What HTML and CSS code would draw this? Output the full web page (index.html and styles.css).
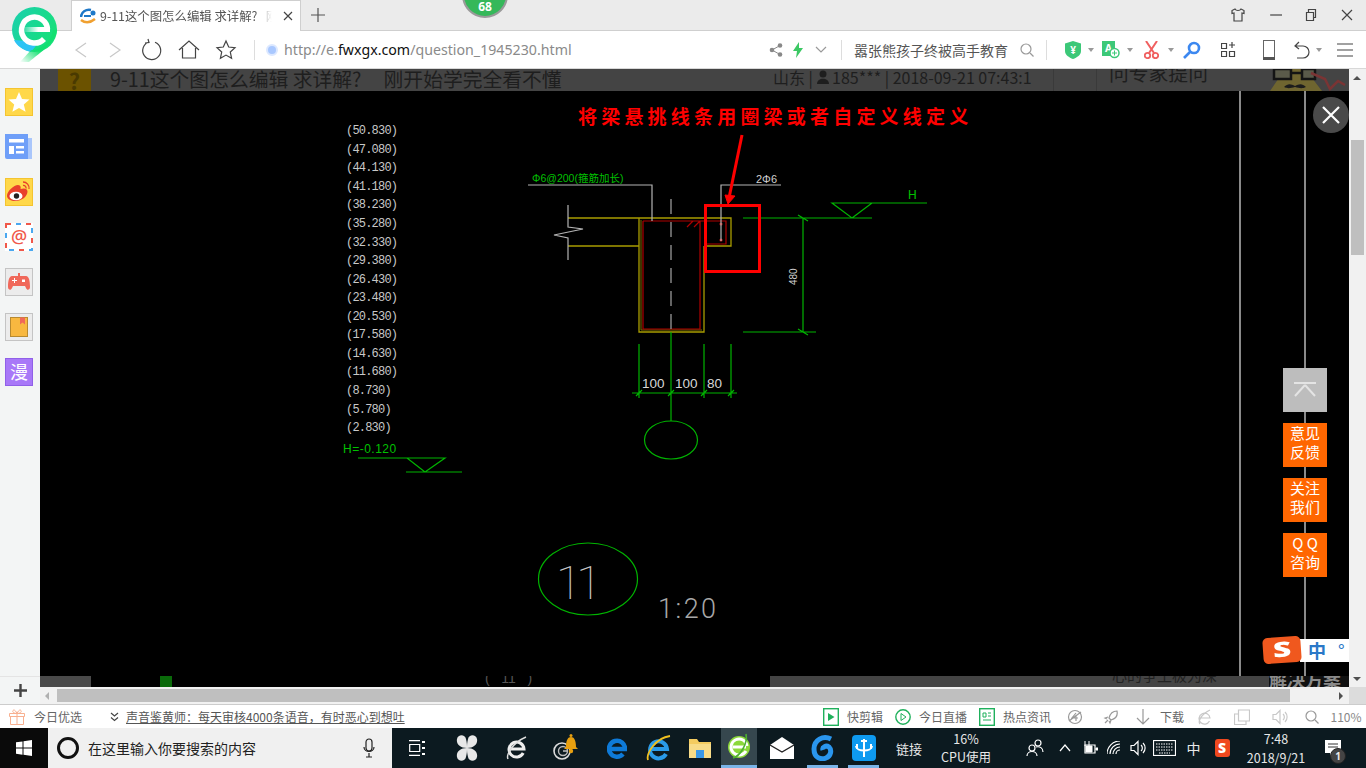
FILE: index.html
```html
<!DOCTYPE html>
<html lang="zh-CN">
<head>
    <meta charset="UTF-8">
    <title>9-11这个图怎么编辑 求详解？</title>
    <link rel="stylesheet" href="styles.css">
</head>
<body>
<div class="window">

    <!-- tab strip -->
    <div class="tabbar">
        <div class="tab">
            <svg class="tab-icon" width="16" height="16" viewBox="0 0 16 16"><path d="M1 9C1 4 6 1 11 2" fill="none" stroke="#1e78c8" stroke-width="2.4"/><path d="M4 8h7" stroke="#1e78c8" stroke-width="2"/><path d="M1 12c4 3 9 3 14-1" fill="none" stroke="#f0a030" stroke-width="2.6"/><circle cx="13" cy="5" r="2.5" fill="#1e78c8"/></svg>
            <span class="tab-title">9-11这个图怎么编辑 求详解? &nbsp;&nbsp;刚开始学完全看不懂</span>
            <svg class="tab-close" width="10" height="10" viewBox="0 0 10 10"><path d="M1 1l8 8M9 1l-8 8" stroke="#444" stroke-width="1.2"/></svg>
        </div>
        <svg class="tab-new" width="14" height="14" viewBox="0 0 14 14"><path d="M7 0v14M0 7h14" stroke="#555" stroke-width="1.2"/></svg>
        <div class="win-controls">
            <svg width="14" height="14" viewBox="0 0 14 14"><path d="M4 1L1 2.500v3l2-.5V13h8V5l2 .5v-3L10 1C9 3 5 3 4 1z" class="ln"/></svg>
            <svg width="12" height="12" viewBox="0 0 12 12"><path d="M0 6h12" class="ln"/></svg>
            <svg width="12" height="12" viewBox="0 0 12 12"><path d="M1.500 3.500h7v8h-7zM3.500 3.500v-3h7v8h-2" class="ln"/></svg>
            <svg width="12" height="12" viewBox="0 0 12 12"><path d="M1 1l10 10M11 1L1 11" class="ln"/></svg>
        </div>
    </div>

    <!-- logo and badge lie over the tab strip -->
    <svg class="logo" width="48" height="58" viewBox="0 0 48 58">
        <defs>
            <linearGradient id="lg1" x1="0" y1="0" x2="1" y2=".6"><stop offset="0" stop-color="#1ccfb0"/><stop offset="1" stop-color="#16e078"/></linearGradient>
            <linearGradient id="lg2" x1="1" y1="0" x2="0" y2="1"><stop offset="0" stop-color="#12e070"/><stop offset=".55" stop-color="#12e070"/><stop offset="1" stop-color="#12e070" stop-opacity="0"/></linearGradient>
            <linearGradient id="lg3" x1="0" y1="0" x2="1" y2="0"><stop offset="0" stop-color="#fff" stop-opacity=".1"/><stop offset=".55" stop-color="#fff"/></linearGradient>
        </defs>
        <circle cx="23.500" cy="23.500" r="22.500" fill="url(#lg1)"/>
        <path d="M3 34C6 40 12 44 20 46L28 36z" fill="#2ec4f4"/>
        <path d="M46 24C45 36 30 46 18 56H9L20 44C30 44 40 36 42 24z" fill="url(#lg2)"/>
        <rect x="13" y="21" width="26" height="5" fill="url(#lg3)"/>
        <path d="M36.500 23.500A13 13 0 1 0 33 33" fill="none" stroke="#fff" stroke-width="5.500"/>
    </svg>
    <div class="badge">68</div>

    <!-- address bar -->
    <div class="toolbar">
        <div class="nav-tools">
            <svg width="24" height="24" viewBox="0 0 24 24"><path d="M17 5L7 12l10 7" class="ln ln-pale"/></svg>
            <svg class="nav-fwd" width="24" height="24" viewBox="0 0 24 24"><path d="M7 5l10 7-10 7" class="ln ln-pale"/></svg>
            <svg width="24" height="24" viewBox="0 0 24 24"><path d="M9 4a9 9 0 1 0 6 .2M8 1l1 3.500L5 5" class="ln"/></svg>
            <svg width="24" height="24" viewBox="0 0 24 24"><path d="M2 12L12 3l10 9M5.500 10v10h13V10" class="ln"/></svg>
            <svg width="24" height="24" viewBox="0 0 24 24"><path d="M12 3l2.700 6 6.300.7-4.700 4.300 1.300 6.300-5.600-3.200-5.600 3.200 1.300-6.300L3 9.700 9.300 9z" class="ln"/></svg>
        </div>
        <i class="divider divider-nav"></i>
        <div class="address">
            <i class="addr-dot"></i>
            <span class="url">http://e.<b>fwxgx.com</b>/question_1945230.html</span>
        </div>
        <div class="tools">
            <svg width="14" height="14" viewBox="0 0 14 14"><circle cx="3" cy="7" r="2.300" fill="#888"/><circle cx="11" cy="2.500" r="2.300" fill="#888"/><circle cx="11" cy="11.500" r="2.300" fill="#888"/><path d="M3 7l8-4.500M3 7l8 4.500" stroke="#888"/></svg>
            <svg width="12" height="16" viewBox="0 0 12 16"><path d="M7 0L1 9h4l-1 7 7-10H7z" fill="#3cc864"/></svg>
            <svg width="12" height="8" viewBox="0 0 12 8"><path d="M1 1l5 5 5-5" class="ln ln-grey"/></svg>
            <i class="divider"></i>
            <span class="hot-search">嚣张熊孩子终被高手教育</span>
            <svg width="14" height="14" viewBox="0 0 14 14"><circle cx="6" cy="6" r="5" class="ln ln-grey"/><path d="M10 10l3.500 3.500" class="ln ln-grey"/></svg>
            <i class="divider divider-2"></i>
            <svg width="16" height="18" viewBox="0 0 16 18"><path d="M8 0l8 2.500V10c0 4-4 6.500-8 8-4-1.500-8-4-8-8V2.500z" fill="#3cc878"/><text x="8" y="13" class="shield-text">¥</text></svg>
            <i class="caret"></i>
            <svg width="18" height="19" viewBox="0 0 18 19"><path d="M0 1h13v15H0z" fill="#3cc878"/><text x="6.500" y="12" class="shield-text">A</text><circle cx="12.500" cy="13" r="4.500" fill="#fff" stroke="#3cc878" stroke-width="1.500"/><path d="M10 13h5M12.500 10.500v5" stroke="#3cc878"/></svg>
            <i class="caret"></i>
            <svg width="15" height="18" viewBox="0 0 15 18"><path d="M2 0l8 12M13 0L5 12" stroke="#f06060" stroke-width="2"/><circle cx="3.500" cy="14.500" r="2.700" fill="none" stroke="#f06060" stroke-width="1.800"/><circle cx="11.500" cy="14.500" r="2.700" fill="none" stroke="#f06060" stroke-width="1.800"/></svg>
            <i class="caret"></i>
            <svg width="18" height="18" viewBox="0 0 18 18"><circle cx="11" cy="7" r="5" fill="none" stroke="#3c88f0" stroke-width="2.600"/><path d="M7 11l-6 6" stroke="#3c88f0" stroke-width="2.600"/></svg>
            <svg width="15" height="17" viewBox="0 0 15 17"><path d="M.5 2.500h5v5h-5zM.5 10.500h5v5h-5zM8.500 10.500h5v5h-5z" class="ln"/><path d="M11 1v6M8 4h6" class="ln"/></svg>
            <svg width="12" height="20" viewBox="0 0 12 20"><rect x=".5" y=".5" width="11" height="19" class="ln ln-thin"/><path d="M0 17h12v3H0z" fill="#555"/></svg>
            <svg width="16" height="18" viewBox="0 0 16 18"><path d="M5 1L1 5l4 3M1 5h8a6 6 0 0 1 0 12H3" class="ln"/></svg>
            <i class="caret"></i>
            <svg width="16" height="14" viewBox="0 0 16 14"><path d="M0 1h16M0 7h16M0 13h16" class="ln"/></svg>
        </div>
    </div>

    <div class="content">
        <aside class="sidebar">
            <div class="side-icons">
                <svg width="28" height="28" viewBox="0 0 28 28"><rect x=".5" y=".5" width="27" height="27" fill="#ffd84a" stroke="#f4c430"/><path d="M14 4l3 7 7.500.6-5.700 4.800 1.800 7.300L14 20l-6.600 3.700 1.800-7.300-5.700-4.800L11 11z" fill="#fff"/></svg>
                <svg width="28" height="28" viewBox="0 0 28 28"><path d="M22 5h5v21h-5z" fill="#a9c6fb"/><path d="M0 1h23v25H2a2 2 0 0 1-2-2z" fill="#6f9ff8"/><path d="M4 6h15v3.500H4zM4 13h5v8H4zM11 13h8v2.500h-8zM11 18h8v2.500h-8z" fill="#fff"/></svg>
                <svg width="28" height="28" viewBox="0 0 28 28"><rect x=".5" y=".5" width="27" height="27" fill="#ffd84a" stroke="#f4c430"/><path d="M2 18c0-5 7-11 11-11 3 0 3 3 2.500 4 3-1 7-1 7 2.500 0 5-6 9.500-12 9.500-4.500 0-8.500-2-8.500-5z" fill="#e8412c"/><ellipse cx="11" cy="18" rx="6.500" ry="4.300" fill="#fff"/><circle cx="11.500" cy="18" r="2.700" fill="#222"/><path d="M18 4a6 6 0 0 1 6 7M18 7.500a2.500 2.500 0 0 1 3 3" fill="none" stroke="#e8412c" stroke-width="1.300"/></svg>
                <svg width="28" height="28" viewBox="0 0 28 28"><rect width="28" height="28" fill="#fff"/><rect x="1" y="1" width="26" height="26" fill="none" stroke="#4aa8f0" stroke-width="2" stroke-dasharray="5 15" stroke-dashoffset="-10"/><rect x="1" y="1" width="26" height="26" fill="none" stroke="#f0584a" stroke-width="2" stroke-dasharray="5 15"/><text x="14" y="20" class="mail-at">@</text></svg>
                <svg width="28" height="28" viewBox="0 0 28 28"><rect x=".5" y=".5" width="27" height="27" fill="#ececec" stroke="#c4c4c4"/><path d="M7 8h14c3 0 4 5 4 11 0 3-3 4-4 1l-1-2H8l-1 2c-1 3-4 2-4-1 0-6 1-11 4-11z" fill="#f0685a"/><path d="M13 5h2v3h-2z" fill="#f0685a"/><path d="M7 12.500h5M9.500 10v5" stroke="#fff"/><rect x="17" y="11.500" width="3" height="2.500" fill="#fff"/></svg>
                <svg width="28" height="28" viewBox="0 0 28 28"><rect x=".5" y=".5" width="27" height="27" fill="#ececec" stroke="#c4c4c4"/><rect x="5.500" y="4.500" width="17" height="19" fill="#f8b840" stroke="#b88a30"/><path d="M15 4.500h5v7l-2.500-2-2.500 2z" fill="#f0685a"/></svg>
                <div class="side-man">漫</div>
            </div>
            <div class="side-add">
                <svg width="13" height="13" viewBox="0 0 13 13"><path d="M6.500 0v13M0 6.500h13" stroke="#444" stroke-width="2.400"/></svg>
            </div>
        </aside>

        <div class="main">
            <div class="page-row">
                <div class="page">
                    <div class="strip-top">
                        <div class="strip-title">
                            <i class="q-mark">?</i>
                            <span>9-11这个图怎么编辑 求详解? &nbsp;&nbsp;&nbsp;&nbsp;刚开始学完全看不懂</span>
                        </div>
                        <div class="strip-meta">山东 | <svg width="12" height="14" viewBox="0 0 12 14"><circle cx="6" cy="4" r="3.500" fill="#1e1e1e"/><path d="M0 14c0-7 12-7 12 0z" fill="#1e1e1e"/></svg> 185*** | 2018-09-21 07:43:1</div>
                        <div class="strip-ask">问专家提问</div>
                        <svg class="strip-mascot" width="84" height="22" viewBox="0 0 84 22">
                            <path d="M5 22L20 0h20l17 22z" fill="#6f6530"/>
                            <rect x="9" y="0" width="17" height="10" fill="#5a5a4a" stroke="#141414" stroke-width="2.500"/>
                            <rect x="37" y="0" width="13" height="10" fill="#5a5a4a" stroke="#141414" stroke-width="2.500"/>
                            <path d="M26 4h11" stroke="#141414" stroke-width="2.500"/>
                            <path d="M19 18c4-4 7-3 11-1 4-2 7-3 11 1-4 2-7 1-11 0-4 1-7 2-11 0z" fill="#1c1c1c"/>
                            <path d="M46 4l14 6 5 10 8-8 7 4" fill="none" stroke="#7a3434" stroke-width="2.500"/>
                        </svg>
                    </div>

                    <div class="viewer">
                        <svg class="cad" width="1309" height="585" viewBox="40 91 1309 585">
                            <path class="c-rule" d="M1240 91V676M1305 91V676"/>

                            <g class="c-note">
                                <text x="346" y="134">(50.830)</text>
                                <text x="346" y="153">(47.080)</text>
                                <text x="346" y="171">(44.130)</text>
                                <text x="346" y="190">(41.180)</text>
                                <text x="346" y="208">(38.230)</text>
                                <text x="346" y="227">(35.280)</text>
                                <text x="346" y="246">(32.330)</text>
                                <text x="346" y="264">(29.380)</text>
                                <text x="346" y="283">(26.430)</text>
                                <text x="346" y="301">(23.480)</text>
                                <text x="346" y="320">(20.530)</text>
                                <text x="346" y="338">(17.580)</text>
                                <text x="346" y="357">(14.630)</text>
                                <text x="346" y="375">(11.680)</text>
                                <text x="346" y="394">(8.730)</text>
                                <text x="346" y="413">(5.780)</text>
                                <text x="346" y="431">(2.830)</text>
                            </g>
                            <text class="c-label-g" x="343" y="453">H=-0.120</text>
                            <path class="c-green" d="M358 458H445L425 472L407 458M406 472H462"/>

                            <!-- section -->
                            <path class="c-yellow" d="M568 218H731V246H704M568 246H639M639 218V332H704V246"/>
                            <path class="c-yellow-2" d="M641 220V330H702"/>
                            <path class="c-dred" d="M643 221H726V244H704M643 221V329H700V221M687 227L693 221M694 227L700 221"/>
                            <path class="c-dash" d="M671 199V332"/>
                            <circle class="c-dot" cx="721" cy="224" r="1.500"/>
                            <circle class="c-dot" cx="721" cy="240" r="1.500"/>
                            <path class="c-white" d="M528 185H652V221M781 185H721V241M568 205V227L583 229L554 235L568 238V260"/>
                            <text class="c-label-s" x="532" y="182">Φ6@200(箍筋加长)</text>
                            <text class="c-dim" x="756" y="183">2Φ6</text>

                            <!-- levels and dimensions -->
                            <path class="c-green" d="M743 218H872L852 218L832 203H927M872 203L852 218M803 218V332M743 332H816M798 215L808 221M798 329L808 335"/>
                            <text class="c-label-g" x="908" y="199">H</text>
                            <text class="c-dim c-dim-v" transform="translate(797 285) rotate(-90)" x="0" y="0">480</text>
                            <path class="c-green" d="M639 344V398M671 332V421M704 344V398M731 344V398M632 393H737M636 396L642 390M668 396L674 390M701 396L707 390M728 396L734 390"/>
                            <text class="c-dim-l" x="642" y="388">100</text>
                            <text class="c-dim-l" x="675" y="388">100</text>
                            <text class="c-dim-l" x="707" y="388">80</text>
                            <ellipse class="c-green" cx="671" cy="440" rx="26.500" ry="19"/>
                            <ellipse class="c-green" cx="588" cy="579" rx="49.500" ry="36"/>
                            <text class="c-num" x="556" y="599">11</text>
                            <text class="c-scale" x="658" y="618">1:20</text>

                            <!-- red annotation -->
                            <text class="c-red-text" x="578" y="124">将梁悬挑线条用圈梁或者自定义线定义</text>
                            <path class="c-arrow" d="M742 135L729 198"/>
                            <path class="c-arrow-head" d="M725 195L735 196L728 204z"/>
                            <rect class="c-box" x="705.500" y="205.500" width="54" height="66"/>
                        </svg>

                        <button class="close-view">
                            <svg width="18" height="18" viewBox="0 0 18 18"><path d="M1 1l16 16M17 1L1 17" stroke="#fff" stroke-width="2.200"/></svg>
                        </button>

                        <div class="side-float">
                            <div class="float-top">
                                <svg width="24" height="16" viewBox="0 0 24 16"><path d="M1 1h22M12 3L2 14M12 3l10 11" stroke="#e4e4e4" stroke-width="2" fill="none"/></svg>
                            </div>
                            <div class="float-btn">意见<br>反馈</div>
                            <div class="float-btn">关注<br>我们</div>
                            <div class="float-btn">Q Q<br>咨询</div>
                        </div>

                        <div class="ime">
                            <div class="ime-logo"><span>S</span></div>
                            <div class="ime-bar"><b>中</b><span>°</span></div>
                        </div>
                    </div>

                    <div class="strip-bottom">
                        <div class="sb-left"></div>
                        <div class="sb-mid">
                            <i class="sb-green"></i>
                            <span class="sb-num">(   11   )</span>
                        </div>
                        <div class="sb-right">
                            <span class="sb-text">心的争王极为深</span>
                            <span class="sb-dark">解决方案</span>
                        </div>
                    </div>
                </div>
                <div class="vscroll">
                    <i class="arrow-up"></i>
                    <i class="vthumb"></i>
                    <i class="arrow-down"></i>
                </div>
            </div>
            <div class="hscroll">
                <i class="arrow-left"></i>
                <i class="hthumb"></i>
                <i class="arrow-right"></i>
                <i class="corner"></i>
            </div>
        </div>
    </div>

    <!-- browser status bar -->
    <div class="status">
        <div class="st-left">
            <svg width="16" height="16" viewBox="0 0 16 16"><path d="M1.500 7.500h13v8h-13zM.5 4.500h15v3H.5zM8 4.500v11M8 4.500C5 4.500 3 3 4 1.500s3 .5 4 3c1-2.500 3-4.500 4-3s-1 3-4 3z" fill="none" stroke="#f8b090"/></svg>
            <span>今日优选</span>
            <svg class="st-chev" width="9" height="10" viewBox="0 0 9 10"><path d="M1 1l3.500 3L8 1M1 5.500l3.500 3 3.500-3" class="ln"/></svg>
            <a class="st-news" href="#">声音鉴黄师：每天审核4000条语音，有时恶心到想吐</a>
        </div>
        <div class="st-links">
            <span class="st-link"><svg width="16" height="18" viewBox="0 0 16 18"><rect x=".7" y=".7" width="14.600" height="16.600" fill="none" stroke="#1fb05c" stroke-width="1.400"/><path d="M5 5l6.500 4L5 13z" fill="#1fb05c"/></svg>快剪辑</span>
            <span class="st-link"><svg width="16" height="18" viewBox="0 0 16 18"><circle cx="8" cy="9" r="7.200" fill="none" stroke="#1fb05c" stroke-width="1.400"/><path d="M6 5.500l5 3.500-5 3.500z" fill="none" stroke="#1fb05c"/></svg>今日直播</span>
            <span class="st-link"><svg width="16" height="18" viewBox="0 0 16 18"><rect x=".7" y=".7" width="14.600" height="16.600" fill="none" stroke="#1fb05c" stroke-width="1.400"/><path d="M4 5h3v4H4zM9 5h3M9 8h3M4 12h8" stroke="#1fb05c" fill="none"/></svg>热点资讯</span>
        </div>
        <div class="st-tools">
            <svg width="16" height="16" viewBox="0 0 16 16"><circle cx="8" cy="8" r="6.500" class="ln ln-grey"/><path d="M9 4L5 9h6M9 6v6M2 12L14 3" class="ln ln-grey"/></svg>
            <svg width="16" height="16" viewBox="0 0 16 16"><path d="M14 2c-4 0-7 3-8 7l2 2c4-1 7-4 6-9zM5 8L2 9l2 1M8 11l-1 3-1-2M5 11l-3 3" class="ln ln-grey"/></svg>
            <svg width="14" height="16" viewBox="0 0 14 16"><path d="M7 0v15M1 9l6 6 6-6" class="ln ln-grey"/></svg>
            <span>下载</span>
            <svg width="16" height="16" viewBox="0 0 16 16"><path d="M2 9h11a5.500 5.500 0 1 0-.5 3M3 15C1 13 3 6 13 1" class="ln ln-pale"/></svg>
            <svg width="16" height="16" viewBox="0 0 16 16"><path d="M4.500 1h11v11h-11zM4.500 5H.5v10.500H12V12" class="ln ln-pale"/></svg>
            <svg width="16" height="16" viewBox="0 0 16 16"><path d="M1 5.500h3l4-4v13l-4-4H1zM11 5a4 4 0 0 1 0 6M13 3a7 7 0 0 1 0 10" class="ln ln-pale"/></svg>
            <svg width="14" height="14" viewBox="0 0 14 14"><circle cx="6" cy="6" r="5" class="ln ln-grey"/><path d="M10 10l3.500 3.500" class="ln ln-grey"/></svg>
            <span class="st-zoom">110%</span>
        </div>
    </div>

    <!-- windows taskbar -->
    <div class="taskbar">
        <div class="start">
            <svg width="16" height="16" viewBox="0 0 16 16"><path d="M0 2.300l6.500-.9v6.200H0zM7.500 1.300L16 0v7.600H7.500zM0 8.600h6.500v6.100L0 13.800zM7.500 8.600H16V16l-8.500-1.200z" fill="#fff"/></svg>
        </div>
        <div class="task-search">
            <i class="cortana"></i>
            <span>在这里输入你要搜索的内容</span>
            <svg width="12" height="20" viewBox="0 0 12 20"><rect x="3" y="1" width="6" height="12" rx="3" fill="none" stroke="#222" stroke-width="1.200"/><path d="M1 9c0 6 10 6 10 0M6 15v4M3 19h6" fill="none" stroke="#222" stroke-width="1.200"/></svg>
        </div>
        <div class="task-apps">
            <span class="tb tb-wide"><svg width="16" height="16" viewBox="0 0 16 16"><path d="M0 .7h11M.7 4.500h10v7h-10zM0 15.300h11" class="ln ln-white"/><path d="M13 1h3v2h-3zM13 7h3v2h-3zM13 13h3v2h-3z" fill="#fff"/></svg></span>
            <span class="tb tb-wide"><svg width="22" height="26" viewBox="0 0 22 26"><path d="M11 13C4 13 0 9 1 4s8-5 9 0c1 4 1 6 1 9zM11 13c7 0 11-4 10-9s-8-5-9 0c-1 4-1 6-1 9zM11 13C4 13 0 17 1 22s8 5 9 0c1-4 1-6 1-9zM11 13c7 0 11 4 10 9s-8 5-9 0c-1-4-1-6-1-9z" fill="#e8e8e8"/></svg></span>
            <span class="tb tb-wide"><svg width="22" height="26" viewBox="0 0 22 26"><path d="M3 14h15a7.500 7.500 0 1 0-.8 4" fill="none" stroke="#eee" stroke-width="3"/><path d="M2 24C0 20 6 8 20 2" fill="none" stroke="#ddd" stroke-width="1.500"/></svg></span>
            <span class="tb tb-wide"><svg width="28" height="30" viewBox="0 0 28 30"><circle cx="9" cy="18" r="8" fill="none" stroke="#ddd" stroke-width="1.600"/><circle cx="10" cy="18" r="4.500" fill="none" stroke="#bbb" stroke-width="1.400"/><path d="M10 18h4" stroke="#ccc" stroke-width="1.400"/><path d="M13 14c0-7 2-10 5-10s5 3 5 10l2 2H11z" fill="#e8a010"/><circle cx="18" cy="2.500" r="1.500" fill="#e8a010"/><circle cx="18" cy="18" r="2.200" fill="#e8a010"/></svg></span>
            <span class="tb tb-edge"><svg width="20" height="24" viewBox="0 0 20 24"><path d="M3 13h15A8 8 0 1 0 16 18" fill="none" stroke="#0e7ad8" stroke-width="4.500"/></svg></span>
            <span class="tb"><svg width="26" height="28" viewBox="0 0 26 28"><path d="M5 15h16a8.500 8.500 0 1 0-1 5" fill="none" stroke="#2a9ae8" stroke-width="4"/><path d="M2 26C0 20 9 4 24 2" fill="none" stroke="#f0c020" stroke-width="1.800"/></svg></span>
            <span class="tb"><svg width="24" height="22" viewBox="0 0 24 22"><path d="M1 2h8l2 3h12v16H1z" fill="#f4cc60"/><path d="M1 7h22v14H1z" fill="#f8dc88"/><path d="M8 13h8v8H8z" fill="#3a98e8"/></svg></span>
            <span class="tb tb-active"><svg width="26" height="30" viewBox="0 0 26 30"><circle cx="13" cy="15" r="11" fill="#8cd83a"/><path d="M20 15H7M20 19a8 8 0 1 1 1-5" fill="none" stroke="#fff" stroke-width="3"/><path d="M7 26C14 24 22 12 20 2" fill="none" stroke="#4cb030" stroke-width="1.600"/></svg></span>
            <span class="tb"><svg width="24" height="22" viewBox="0 0 24 22"><path d="M0 8L12 0l12 8v14H0z" fill="#fff"/><path d="M0 8l12 7 12-7" fill="none" stroke="#222" stroke-width="1.400"/></svg></span>
            <span class="tb tb-open"><svg width="24" height="26" viewBox="0 0 24 26"><path d="M20 4C12 0 3 5 3 14s7 11 12 9c5-2 6-8 3-11-3-2-7 0-6 3" fill="none" stroke="#2a96ee" stroke-width="5"/></svg></span>
            <span class="tb tb-open"><svg width="24" height="26" viewBox="0 0 24 26"><rect width="24" height="26" rx="4" fill="#0e9af0"/><path d="M12 4v18M4 11c0 6 16 6 16 0M9 6h6M5 9v5M19 9v5" fill="none" stroke="#fff" stroke-width="2"/></svg></span>
            <span class="tb-label">链接</span>
            <span class="tb-cpu">16%<br>CPU使用</span>
        </div>
        <div class="tray">
            <svg width="18" height="18" viewBox="0 0 18 18"><circle cx="12" cy="4" r="3" class="ln ln-white"/><circle cx="6" cy="9" r="3" class="ln ln-white"/><path d="M1 17c0-6 10-6 10 0M10 8c4-1 7 1 7 5" class="ln ln-white"/></svg>
            <svg width="12" height="8" viewBox="0 0 12 8"><path d="M1 7l5-6 5 6" class="ln ln-white"/></svg>
            <svg width="16" height="14" viewBox="0 0 16 14"><path d="M3 4h10v8H3z" class="ln ln-white"/><path d="M4 5h6v6H4zM14 7h2v2h-2zM3 0v5M7 0v5" fill="#fff" stroke="#fff"/></svg>
            <svg width="16" height="14" viewBox="0 0 16 14"><path d="M0 13a13 13 0 0 1 13-13M3 13A10 10 0 0 1 13 3M6 13a7 7 0 0 1 7-7M9 13a4 4 0 0 1 4-4" class="ln ln-white"/></svg>
            <svg width="16" height="16" viewBox="0 0 16 16"><path d="M1 5.500h3l4-4v13l-4-4H1zM11 5a4 4 0 0 1 0 6M13 3a7 7 0 0 1 0 10" class="ln ln-white"/></svg>
            <svg width="23" height="16" viewBox="0 0 23 16"><rect x=".5" y=".5" width="22" height="15" class="ln ln-white"/><path d="M3 4h17M3 7h17M3 10h17M6 13h11" stroke="#fff" stroke-dasharray="1.500 1"/></svg>
            <span class="tray-ime">中</span>
            <div class="tray-sogou">S</div>
            <div class="clock">7:48<br>2018/9/21</div>
            <div class="notif">
                <svg width="16" height="17" viewBox="0 0 16 17"><path d="M0 0h16v13H8l-3 4v-4H0z" fill="#fff"/><path d="M3 4h10M3 7h10" stroke="#333"/></svg>
                <b class="notif-num">1</b>
            </div>
        </div>
    </div>
</div>
</body>
</html>
```

FILE: styles.css
```css
* {
    box-sizing: border-box;
}
html, body {
    margin: 0;
    padding: 0;
    overflow: hidden;
}
body {
    font-family: "Noto Sans CJK SC", "Noto Sans", sans-serif;
    background: #fff;
}
i {
    font-style: normal;
    display: block;
}
.ln {
    fill: none;
    stroke: #444;
    stroke-width: 1.2;
}
.ln-pale {
    stroke: #c8c8c8;
}
.ln-grey {
    stroke: #999;
}
.ln-white {
    stroke: #fff;
}
.ln-thin {
    stroke: #666;
    stroke-width: 1;
}
.window {
    position: relative;
    width: 1366px;
    height: 768px;
    display: flex;
    flex-direction: column;
    overflow: hidden;
}

/* tab strip */
.tabbar {
    height: 31px;
    flex: none;
    background: #ebebeb;
    border-bottom: 1px solid #cfcfcf;
    display: flex;
    align-items: flex-end;
    padding-left: 71px;
}
.tab {
    width: 230px;
    height: 31px;
    background: #fff;
    border: 1px solid #cfcfcf;
    border-bottom: none;
    display: flex;
    align-items: center;
    padding-left: 8px;
    margin-bottom: -1px;
}
.tab-title {
    width: 172px;
    margin-left: 4px;
    font-size: 12.400px;
    color: #555;
    white-space: nowrap;
    overflow: hidden;
    -webkit-mask-image: linear-gradient(90deg, #000 90%, transparent);
    mask-image: linear-gradient(90deg, #000 90%, transparent);
}
.tab-close {
    margin-left: 11px;
}
.tab-new {
    margin: 0 0 8px 10px;
}
.win-controls {
    margin-left: auto;
    width: 148px;
    height: 30px;
    display: grid;
    grid-template-columns: 40px 36px 34px 38px;
    align-items: center;
    justify-items: center;
}
.logo {
    position: absolute;
    left: 11px;
    top: 6px;
    z-index: 3;
}
.badge {
    position: absolute;
    left: 462px;
    top: -28px;
    width: 46px;
    height: 46px;
    border-radius: 50%;
    background: #35b85a;
    border: 2px solid #9a9a9a;
    color: #fff;
    font: bold 12px "Noto Sans", sans-serif;
    line-height: 1;
    display: flex;
    align-items: flex-end;
    justify-content: center;
    padding-bottom: 3px;
    z-index: 3;
}

/* address bar */
.toolbar {
    height: 38px;
    flex: none;
    background: #fff;
    border-bottom: 1px solid #d8d8d8;
    display: flex;
    align-items: center;
    padding-left: 69px;
}
.nav-tools {
    display: flex;
    gap: 13px;
}
.nav-fwd {
    margin-left: -3px;
}
.divider {
    width: 1px;
    height: 20px;
    background: #ddd;
}
.divider-nav {
    margin-left: 16px;
}
.address {
    display: flex;
    align-items: center;
    flex: 1;
    padding-left: 11px;
}
.addr-dot {
    width: 12px;
    height: 12px;
    border-radius: 50%;
    background: #a9c8ff;
    border: 2px solid #dce8ff;
}
.url {
    margin-left: 6px;
    font: 14.200px "Noto Sans", sans-serif;
    color: #8a8a8a;
}
.url b {
    font-weight: 400;
    color: #111;
}
.tools {
    width: 601px;
    display: grid;
    grid-template-columns: 22px 22px 24px 17px 166px 22px 24px 22px 14px 26px 12px 30px 10px 32px 40px 42px 24px 10px 42px;
    align-items: center;
    justify-items: center;
}
.hot-search {
    justify-self: start;
    padding-left: 4px;
    font-size: 14px;
    color: #555;
    white-space: nowrap;
}
.divider-2 {
    justify-self: start;
    margin-left: 8px;
}
.caret {
    width: 0;
    height: 0;
    border-left: 3.500px solid transparent;
    border-right: 3.500px solid transparent;
    border-top: 4px solid #999;
}
.shield-text {
    font: bold 10px "Noto Sans", sans-serif;
    fill: #fff;
    text-anchor: middle;
}

/* content */
.content {
    flex: 1;
    min-height: 0;
    display: flex;
}
.sidebar {
    width: 40px;
    flex: none;
    background: #f3f5f5;
    display: flex;
    flex-direction: column;
    justify-content: space-between;
}
.side-icons {
    padding: 19px 0 0 5px;
    display: flex;
    flex-direction: column;
    gap: 17px;
}
.side-man {
    width: 28px;
    height: 28px;
    background: #a878f8;
    border: 1px solid #9060e8;
    color: #fff;
    font-size: 18px;
    line-height: 25px;
    text-align: center;
}
.side-add {
    height: 28px;
    border-top: 1px solid #e4e4e4;
    display: flex;
    align-items: center;
    justify-content: center;
}
.mail-at {
    font: 500 18px "Noto Sans", sans-serif;
    fill: #f0584a;
    text-anchor: middle;
}
.main {
    flex: 1;
    min-width: 0;
    display: flex;
    flex-direction: column;
}
.page-row {
    flex: 1;
    min-height: 0;
    display: flex;
}
.page {
    flex: 1;
    min-width: 0;
    display: flex;
    flex-direction: column;
    background: #000;
}

/* dimmed page under the viewer */
.strip-top {
    position: relative;
    height: 22px;
    flex: none;
    background: #444;
    color: #1e1e1e;
    display: grid;
    grid-template-columns: 733px 281px 42px 1fr;
    overflow: hidden;
}
.strip-title {
    display: flex;
    align-items: flex-start;
    padding-left: 18px;
    font-size: 19.800px;
    line-height: 20px;
    white-space: nowrap;
}
.q-mark {
    width: 33px;
    height: 22px;
    margin-right: 19px;
    background: #6b5200;
    color: #4a3a00;
    font-weight: 700;
    text-align: center;
    font-size: 22px;
    line-height: 22px;
}
.strip-meta {
    font-size: 16px;
    line-height: 16px;
    white-space: nowrap;
    border-right: 1px solid #3a3a3a;
}
.strip-ask {
    grid-column: 4;
    padding-left: 12px;
    border-left: 1px solid #3a3a3a;
    font-size: 19.800px;
    line-height: 8px;
    white-space: nowrap;
}
.strip-mascot {
    position: absolute;
    left: 1225px;
    top: 0;
}
.viewer {
    position: relative;
    flex: 1;
    min-height: 0;
    background: #000;
    overflow: hidden;
}
.cad {
    display: block;
}
.cad path, .cad ellipse, .cad rect {
    fill: none;
}
.c-rule {
    stroke: #8a8a8a;
    stroke-width: 2;
}
.c-note {
    font: 12px "Liberation Mono", monospace;
    fill: #c8c8c8;
    letter-spacing: -.8px;
}
.c-label-g {
    font: 12px "Liberation Sans", sans-serif;
    fill: #00c000;
    letter-spacing: .5px;
}
.c-label-s {
    font: 10.500px "Liberation Sans", "Noto Sans CJK SC", sans-serif;
    fill: #00c000;
}
.c-dim {
    font: 11px "Liberation Sans", sans-serif;
    fill: #d0d0d0;
}
.c-dim-v {
    font-size: 10px;
}
.c-dim-l {
    font: 13.500px "Liberation Sans", sans-serif;
    fill: #d8d8d8;
}
.c-num {
    font: 100 46px Roboto, sans-serif;
    fill: #c8c8c8;
    letter-spacing: -5px;
}
.c-scale {
    font: 300 27px Roboto, sans-serif;
    fill: #a8a8a8;
    letter-spacing: 2.500px;
}
.c-red-text {
    font: 700 19px "Noto Sans CJK SC", sans-serif;
    fill: #f00;
    letter-spacing: 4.200px;
}
.cad .c-green {
    stroke: #00b400;
    stroke-width: 1.200;
}
.cad .c-yellow {
    stroke: #a89c00;
    stroke-width: 1.300;
}
.cad .c-yellow-2 {
    stroke: #786c00;
}
.cad .c-dred {
    stroke: #b00000;
    stroke-width: 1.200;
}
.cad .c-dash {
    stroke: #8e8e8e;
    stroke-width: 1.400;
    stroke-dasharray: 15 8;
}
.c-dot {
    fill: #d82020;
}
.cad .c-white {
    stroke: #b4b4b4;
    stroke-width: 1.200;
}
.cad .c-arrow {
    stroke: #f00;
    stroke-width: 3;
}
.cad .c-arrow-head {
    fill: #f00;
    stroke: #f00;
    stroke-width: 1;
}
.cad .c-box {
    stroke: #f00;
    stroke-width: 3;
}
.close-view {
    position: absolute;
    left: 1273px;
    top: 6px;
    width: 36px;
    height: 36px;
    padding: 0;
    border: none;
    border-radius: 50%;
    background: #4a4a4a;
    display: flex;
    align-items: center;
    justify-content: center;
}
.side-float {
    position: absolute;
    left: 1243px;
    top: 277px;
    width: 44px;
    display: flex;
    flex-direction: column;
    gap: 11px;
}
.float-top {
    height: 44px;
    background: #bdbdbd;
    display: flex;
    align-items: center;
    justify-content: center;
}
.float-btn {
    height: 44px;
    background: #ff6600;
    color: #fff;
    font-size: 15px;
    line-height: 19px;
    text-align: center;
}
.ime {
    position: absolute;
    left: 1223px;
    top: 546px;
    width: 86px;
    display: flex;
    align-items: center;
}
.ime-logo {
    width: 38px;
    height: 26px;
    flex: none;
    background: #f0581e;
    border-radius: 5px;
    color: #fff;
    font: 900 21px/25px "Noto Sans", sans-serif;
    text-align: center;
    transform: rotate(-4deg);
    z-index: 1;
}
.ime-logo span {
    display: inline-block;
    transform: scaleX(1.5);
}
.ime-bar {
    flex: 1;
    height: 23px;
    margin-left: -1px;
    background: #fff;
    color: #2a78c8;
    font-size: 18px;
    line-height: 22px;
    display: flex;
    gap: 12px;
    padding-left: 8px;
    white-space: nowrap;
}
.strip-bottom {
    height: 11px;
    flex: none;
    display: grid;
    grid-template-columns: 51px 679px 1fr;
    overflow: hidden;
}
.sb-left {
    background: #4a4a4a;
}
.sb-mid {
    position: relative;
    background: #000;
}
.sb-green {
    position: absolute;
    left: 69px;
    top: 0;
    width: 12px;
    height: 11px;
    background: #0a6a0a;
}
.sb-num {
    position: absolute;
    left: 394px;
    top: -6px;
    font: 14px "Liberation Sans", sans-serif;
    color: #555;
    white-space: pre;
}
.sb-right {
    background: #444;
    position: relative;
    overflow: hidden;
}
.sb-text {
    position: absolute;
    left: 342px;
    top: -12px;
    font-size: 15px;
    color: #222;
    white-space: nowrap;
}
.sb-dark {
    position: absolute;
    left: 499px;
    top: -5px;
    width: 80px;
    height: 16px;
    background: #111;
    color: #8a8a8a;
    font-size: 18px;
    font-weight: 700;
    line-height: 16px;
    white-space: nowrap;
}
.vscroll {
    position: relative;
    width: 17px;
    flex: none;
    background: #f1f1f1;
}
.arrow-up {
    position: absolute;
    left: 4px;
    top: 7px;
    border-left: 4px solid transparent;
    border-right: 4px solid transparent;
    border-bottom: 4px solid #505050;
}
.arrow-down {
    position: absolute;
    left: 4px;
    bottom: 6px;
    border-left: 4px solid transparent;
    border-right: 4px solid transparent;
    border-top: 4px solid #505050;
}
.vthumb {
    position: absolute;
    left: 2px;
    top: 71px;
    width: 13px;
    height: 115px;
    background: #bfbfbf;
}
.hscroll {
    height: 17px;
    flex: none;
    background: #f1f1f1;
    display: flex;
    align-items: center;
}
.arrow-left {
    margin-left: 5px;
    border-top: 4px solid transparent;
    border-bottom: 4px solid transparent;
    border-right: 4px solid #b0b0b0;
}
.hthumb {
    width: 1233px;
    height: 13px;
    margin-left: 8px;
    background: #bfbfbf;
}
.arrow-right {
    margin-left: 49px;
    border-top: 4px solid transparent;
    border-bottom: 4px solid transparent;
    border-left: 4px solid #505050;
}
.corner {
    margin-left: auto;
    width: 17px;
    height: 17px;
    background: #dcdcdc;
}

/* status bar */
.status {
    height: 24px;
    flex: none;
    background: #fff;
    border-top: 1px solid #ccc;
    display: flex;
    align-items: center;
    font-size: 12px;
    color: #666;
}
.st-left {
    display: flex;
    align-items: center;
    gap: 9px;
    padding-left: 9px;
    width: 823px;
}
.st-chev {
    margin-left: 19px;
    margin-right: -2px;
}
.st-news {
    color: #555;
    white-space: nowrap;
}
.st-links {
    display: flex;
    gap: 12px;
    width: 235px;
}
.st-link {
    display: flex;
    align-items: center;
    gap: 8px;
    white-space: nowrap;
}
.st-tools {
    flex: 1;
    display: grid;
    grid-template-columns: 34px 38px 26px 32px 34px 40px 36px 28px 40px;
    align-items: center;
    justify-items: center;
}
.st-zoom {
    color: #888;
    white-space: nowrap;
}

/* taskbar */
.taskbar {
    height: 40px;
    flex: none;
    background: #0c1a20;
    display: flex;
    align-items: center;
    color: #e8e8e8;
}
.start {
    width: 48px;
    height: 40px;
    flex: none;
    background: #0a0a0a;
    display: flex;
    align-items: center;
    justify-content: center;
}
.task-search {
    width: 344px;
    height: 40px;
    flex: none;
    background: #f0f0f0;
    color: #222;
    font-size: 14px;
    display: flex;
    align-items: center;
    padding-left: 9px;
}
.cortana {
    width: 22px;
    height: 22px;
    border: 3px solid #111;
    border-radius: 50%;
    margin-right: 9px;
}
.task-search svg {
    margin-left: 107px;
}
.task-apps {
    display: flex;
    align-items: center;
    height: 40px;
}
.tb {
    position: relative;
    width: 41px;
    height: 40px;
    display: flex;
    align-items: center;
    justify-content: center;
}
.tb-wide {
    width: 50px;
}
.tb-edge {
    width: 46px;
    padding-left: 4px;
}
.tb-active {
    width: 36px;
    margin: 0 4px 0 1px;
    background: #36474e;
    border-bottom: 3px solid #7ab4e8;
}
.tb-open::after {
    content: "";
    position: absolute;
    left: 5px;
    right: 5px;
    bottom: 0;
    height: 3px;
    background: #7ab4e8;
}
.tb-label {
    width: 50px;
    font-size: 13px;
    text-align: center;
}
.tb-cpu {
    width: 64px;
    font-size: 12.500px;
    line-height: 18px;
    text-align: center;
    white-space: nowrap;
}
.tray {
    flex: 1;
    padding-left: 20px;
    display: grid;
    grid-template-columns: 34px 26px 24px 25px 21px 33px 25px 32px 76px 38px 14px;
    align-items: center;
    justify-items: center;
}
.tray-ime {
    font-size: 14px;
}
.tray-sogou {
    width: 15px;
    height: 18px;
    background: #f0481e;
    border-radius: 3px;
    color: #fff;
    font: 900 14px/17px "Noto Sans", sans-serif;
    text-align: center;
}
.clock {
    font-size: 12.500px;
    line-height: 19px;
    text-align: center;
    white-space: nowrap;
}
.notif {
    position: relative;
}
.notif svg {
    display: block;
}
.notif-num {
    position: absolute;
    left: 5px;
    top: 8px;
    width: 16px;
    height: 16px;
    border-radius: 50%;
    background: #444;
    border: 1px solid #222;
    font: bold 10px/14px "Noto Sans", sans-serif;
    text-align: center;
}
```
